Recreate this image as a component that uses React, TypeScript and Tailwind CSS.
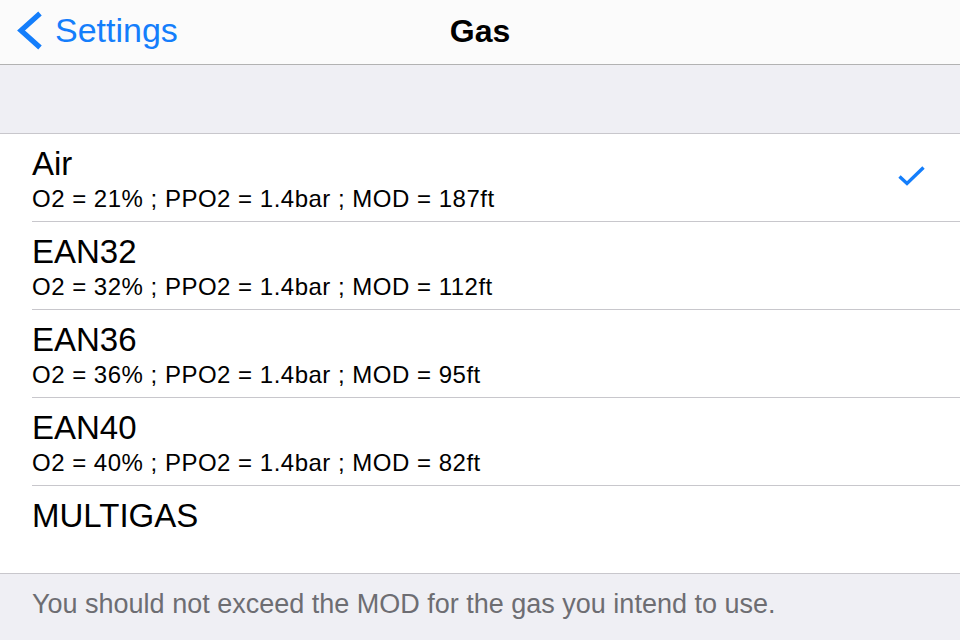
import React from "react";

const rows = [
  { name: "Air", sub: "O2 = 21% ; PPO2 = 1.4bar ; MOD = 187ft", checked: true },
  { name: "EAN32", sub: "O2 = 32% ; PPO2 = 1.4bar ; MOD = 112ft" },
  { name: "EAN36", sub: "O2 = 36% ; PPO2 = 1.4bar ; MOD = 95ft" },
  { name: "EAN40", sub: "O2 = 40% ; PPO2 = 1.4bar ; MOD = 82ft" },
];

export default function App() {
  return (
    <div
      className="w-[960px] h-[640px] overflow-hidden bg-[#efeff4] text-black"
      style={{ fontFamily: '"Liberation Sans", Arial, sans-serif' }}
    >
      {/* Nav bar */}
      <div className="h-[65px] bg-[#fbfbfb] border-b border-[#b2b2b2] grid grid-cols-[1fr_auto_1fr] items-start">
        <div className="flex items-start pl-[16px] pt-[11px]">
          <svg width="28" height="39" viewBox="0 0 28 39" className="shrink-0">
            <path d="M24 2.5 L5 19.5 L24 36.5" fill="none" stroke="#147efb" strokeWidth="5.2" strokeLinecap="butt" strokeLinejoin="miter" />
          </svg>
          <span className="ml-[11px] mt-[2px] text-[34px] leading-[34px] text-[#147efb]">Settings</span>
        </div>
        <div className="pt-[15px] text-[32px] leading-[32px] font-bold">Gas</div>
        <div />
      </div>

      {/* spacer */}
      <div className="h-[69px] border-b border-[#c8c7cc]" />

      {/* list */}
      <div className="bg-white border-b border-[#c8c7cc]">
        {rows.map((r) => (
          <div key={r.name} className="pl-[32px]">
            <div className="h-[88px] border-b border-[#c8c7cc] flex items-center pr-[32px]">
              <div className="flex-1 self-start pt-[13px]">
                <div className="text-[33px] leading-[33px]">{r.name}</div>
                <div className="mt-[7px] text-[24px] leading-[24px] tracking-[0.5px]">{r.sub}</div>
              </div>
              {r.checked && (
                <svg width="30" height="24" viewBox="0 0 30 24" className="mt-[-4px] mr-[1px]">
                  <path d="M2.5 12.5 L10 19.5 L26.5 3.5" fill="none" stroke="#147efb" strokeWidth="3.4" />
                </svg>
              )}
            </div>
          </div>
        ))}
        <div className="pl-[32px] h-[87px] pt-[13px]">
          <div className="text-[33px] leading-[33px]">MULTIGAS</div>
        </div>
      </div>

      {/* footer */}
      <div className="pl-[32px] pt-[17px] text-[27px] leading-[27px] text-[#6d6d72]">
        You should not exceed the MOD for the gas you intend to use.
      </div>
    </div>
  );
}
